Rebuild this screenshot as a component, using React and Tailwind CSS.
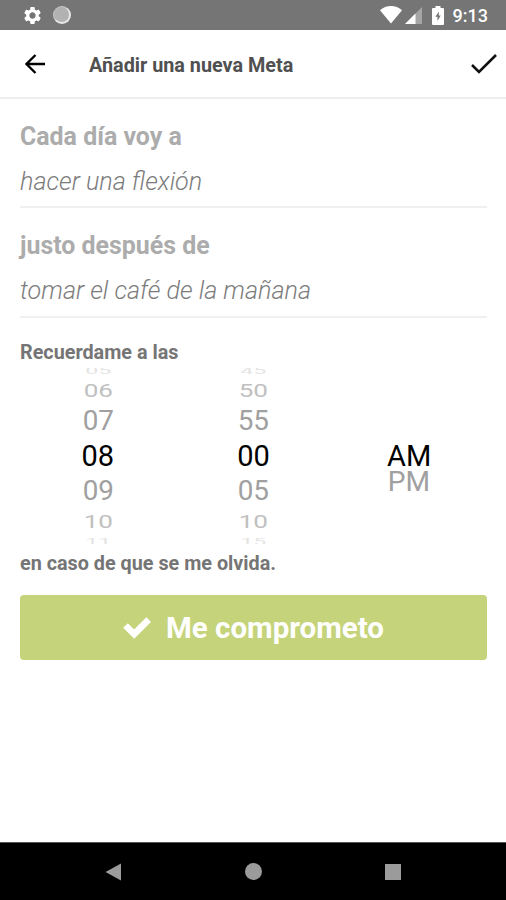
import { useState } from "react";
import { MdSettings } from "react-icons/md";

const hours = ["05", "06", "07", "08", "09", "10", "11"];
const minutes = ["45", "50", "55", "00", "05", "10", "15"];

// rows get flatter and lighter towards the edges of the wheel
const wheelRows = [
  {
    row: "h-[15px] pb-px",
    text: "text-[#e4e4e4] scale-x-[0.8] scale-y-[0.34]",
  },
  {
    row: "h-[26px] pb-[2px]",
    text: "text-[#c0c0c0] scale-x-[0.9] scale-y-[0.65]",
  },
  { row: "h-[34px]", text: "text-[#a0a0a0] scale-x-[0.96] scale-y-[0.93]" },
  { row: "h-[36px]", text: "text-black" },
  { row: "h-[34px]", text: "text-[#a0a0a0] scale-x-[0.96] scale-y-[0.93]" },
  { row: "h-[26px]", text: "text-[#c0c0c0] scale-x-[0.9] scale-y-[0.65]" },
  { row: "h-[15px]", text: "text-[#e4e4e4] scale-x-[0.8] scale-y-[0.34]" },
];

const StatusBar = () => {
  return (
    <div className="flex h-[30px] shrink-0 items-center bg-[#757575] pl-[22px] pr-[18px] text-white">
      <MdSettings className="h-[21px] w-[21px]" />
      <div className="ml-[10px] h-[18px] w-[18px] rounded-full border border-[#c4c4c4] border-b-2 border-r-2 border-b-[#e8e8e8] border-r-[#e8e8e8] bg-[#b2b2b2]" />
      <div className="ml-auto flex items-center">
        <svg width="22" height="18" viewBox="0 0 22 18">
          <path d="M0 4.2C3 1.5 7 0 11 0s8 1.5 11 4.2L11 17.6z" fill="#fff" />
        </svg>
        <svg className="ml-[3px]" width="17" height="17" viewBox="0 0 17 17">
          <path d="M0 17L17 0v17z" fill="#fff" fillOpacity="0.35" />
          <path d="M0 17L10.500 6.500V17z" fill="#fff" />
        </svg>
        <svg className="ml-[10px]" width="12" height="19" viewBox="0 0 12 19">
          <path
            d="M3.500 0h5v2H11a1 1 0 0 1 1 1v15a1 1 0 0 1-1 1H1a1 1 0 0 1-1-1V3a1 1 0 0 1 1-1h2.500z"
            fill="#fff"
          />
          <path
            d="M7 5.500L3.300 10.800h2.200v4.200L8.700 9.500H6.700z"
            fill="#757575"
          />
        </svg>
        <span className="ml-[9px] pt-px text-[18px] font-medium leading-[29px]">
          9:13
        </span>
      </div>
    </div>
  );
};

const Header = () => {
  return (
    <div className="flex h-[68.500px] shrink-0 items-center border-b-2 border-[#eeeeee] pl-[25px] pr-[9px] pt-[2px]">
      <button type="button" aria-label="Volver">
        <svg width="20" height="20" viewBox="0 0 20 20" fill="none">
          <path
            d="M20 10H2M10.500 1L1.500 10l9 9"
            stroke="#000"
            strokeWidth="2.3"
          />
        </svg>
      </button>
      <h1 className="ml-[44px] pt-[3px] text-[19.800px] font-bold leading-6 text-[#505050]">
        Añadir una nueva Meta
      </h1>
      <button type="button" aria-label="Guardar" className="ml-auto">
        <svg width="26" height="20" viewBox="0 0 26 20" fill="none">
          <path d="M1 11l7 7L25 1" stroke="#111" strokeWidth="2.6" />
        </svg>
      </button>
    </div>
  );
};

const Field = ({ label, value }) => {
  return (
    <div className="h-[109.500px] border-b-2 border-[#f0f0f0]">
      <h2 className="pt-[21px] text-[24.900px] font-bold leading-[34px] text-[#acacac]">
        {label}
      </h2>
      <p className="pt-[11px] text-[25.150px] font-light italic leading-[34px] text-[#7c7c7c]">
        {value}
      </p>
    </div>
  );
};

const Wheel = ({ items }) => {
  return (
    <div className="flex flex-1 flex-col items-center justify-center">
      {items.map((item, i) => (
        <div
          key={item}
          className={`flex shrink-0 items-center ${wheelRows[i].row}`}
        >
          <span className={`text-[29px] leading-none ${wheelRows[i].text}`}>
            {item}
          </span>
        </div>
      ))}
    </div>
  );
};

const NavBar = () => {
  return (
    <div className="flex h-[58px] shrink-0 items-center justify-between border-t border-[#555555] bg-black px-[105px]">
      <svg width="17" height="18" viewBox="0 0 17 18">
        <path d="M0.500 9L16 0.500v17z" fill="#9b9b9b" />
      </svg>
      <div className="h-[17px] w-[17px] rounded-full bg-[#9b9b9b]" />
      <div className="h-4 w-4 bg-[#9b9b9b]" />
    </div>
  );
};

const App = () => {
  const [committed, setCommitted] = useState(false);

  return (
    <div className="flex h-[900px] w-[506px] flex-col overflow-hidden bg-white font-['Roboto',sans-serif]">
      <StatusBar />
      <Header />
      <main className="flex flex-1 flex-col pl-5 pr-[19px]">
        <Field label="Cada día voy a" value="hacer una flexión" />
        <Field label="justo después de" value="tomar el café de la mañana" />

        <p className="mt-[23px] text-[19.800px] font-bold leading-6 text-[#757575]">
          Recuerdame a las
        </p>
        <div className="mt-[3.500px] flex h-[176px] overflow-hidden">
          <Wheel items={hours} />
          <Wheel items={minutes} />
          <div className="flex flex-1 flex-col items-center pt-[75px] text-[29px]">
            <span className="h-[26px] leading-[26px] text-black">AM</span>
            <span className="h-[26px] scale-x-[0.97] scale-y-[0.93] leading-[26px] text-[#a0a0a0]">
              PM
            </span>
          </div>
        </div>
        <p className="mt-[8px] text-[19.800px] font-bold leading-6 text-[#757575]">
          en caso de que se me olvida.
        </p>

        <button
          type="button"
          onClick={() => setCommitted(!committed)}
          className="mt-[19px] flex h-[65px] items-center justify-center rounded-[4px] bg-[#c5d37a] text-white"
        >
          <svg width="28" height="24" viewBox="0 0 28 24" fill="none">
            <path
              d="M2.500 9.500l8.700 8.700L25.700 3.700"
              stroke="currentColor"
              strokeWidth="6.600"
            />
          </svg>
          <span className="ml-[15px] pt-[2px] text-[29.500px] font-bold">
            Me comprometo
          </span>
        </button>
      </main>
      <NavBar />
    </div>
  );
};

export default App;
